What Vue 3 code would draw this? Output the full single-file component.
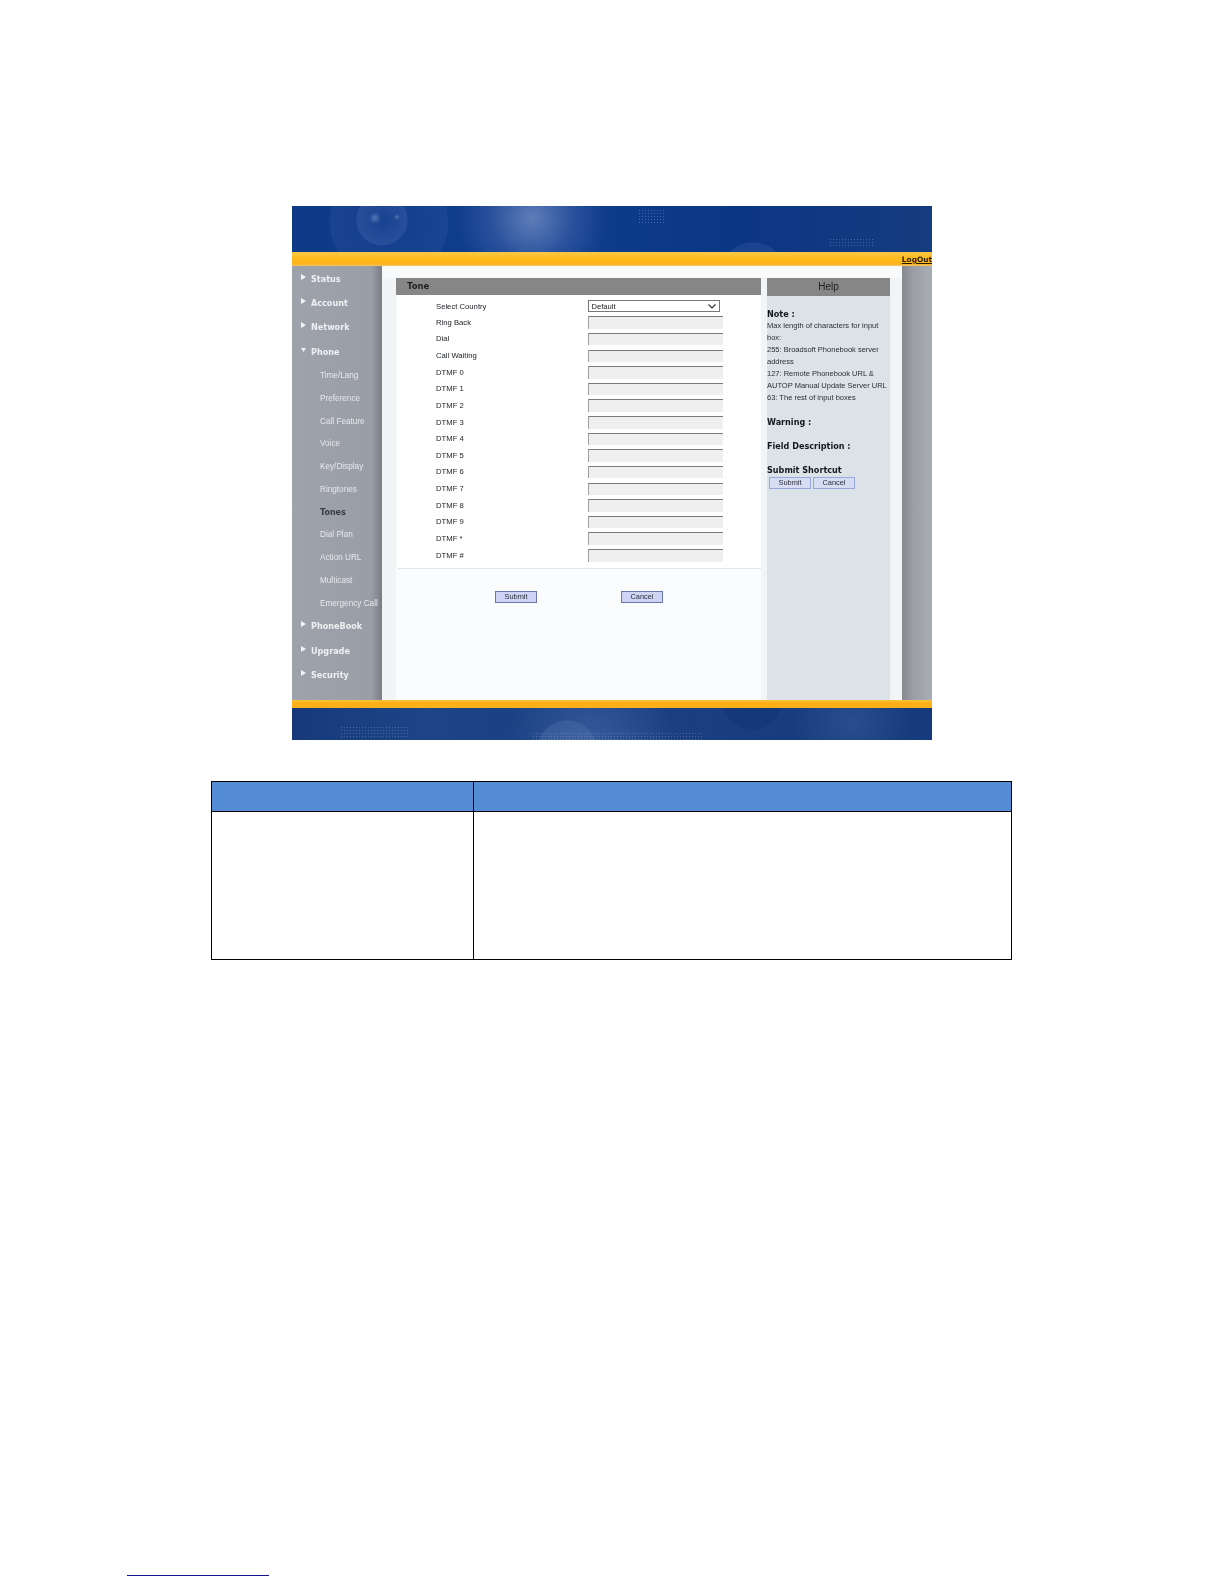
<script setup>
const navTop = ['Status', 'Account', 'Network']
const navSub = ['Time/Lang', 'Preference', 'Call Feature', 'Voice', 'Key/Display', 'Ringtones', 'Tones', 'Dial Plan', 'Action URL', 'Multicast', 'Emergency Call']
const navBottom = ['PhoneBook', 'Upgrade', 'Security']
const fields = ['Ring Back', 'Dial', 'Call Waiting', 'DTMF 0', 'DTMF 1', 'DTMF 2', 'DTMF 3', 'DTMF 4', 'DTMF 5', 'DTMF 6', 'DTMF 7', 'DTMF 8', 'DTMF 9', 'DTMF *', 'DTMF #']
const noteLines = ['Max length of characters for input', 'box:', '255: Broadsoft Phonebook server', 'address', '127: Remote Phonebook URL &', 'AUTOP Manual Update Server URL', '63: The rest of input boxes']
</script>

<template>
  <div class="page">
    <div class="shot">
      <div class="banner">
        <span class="dots dots-a"></span>
        <span class="dots dots-b"></span>
      </div>
      <div class="band"><a class="logout">LogOut</a></div>
      <div class="body">
        <nav class="side">
          <div v-for="n in navTop" :key="n" class="top-item">
            <svg class="tri" width="5" height="6" viewBox="0 0 5 6"><path d="M0 0L5 3L0 6Z" fill="#f2f4f7" /></svg>{{ n }}
          </div>
          <div class="top-item">
            <svg class="tri" width="5" height="6" viewBox="0 0 5 6"><path d="M0 1H5L2.5 5Z" fill="#f2f4f7" /></svg>Phone
          </div>
          <div v-for="s in navSub" :key="s" class="sub-item" :class="{ current: s === 'Tones' }">{{ s }}</div>
          <div v-for="n in navBottom" :key="n" class="top-item">
            <svg class="tri" width="5" height="6" viewBox="0 0 5 6"><path d="M0 0L5 3L0 6Z" fill="#f2f4f7" /></svg>{{ n }}
          </div>
        </nav>
        <main class="main">
          <section class="form-col">
            <h2 class="tone-title">Tone</h2>
            <div class="form">
              <div class="row first">
                <label class="lbl">Select Country</label>
                <div class="select">
                  <span>Default</span>
                  <svg width="8" height="5" viewBox="0 0 8 5"><path d="M0.5 0.5L4 4L7.5 0.5" fill="none" stroke="#333" stroke-width="1.1" /></svg>
                </div>
              </div>
              <div v-for="f in fields" :key="f" class="row">
                <label class="lbl">{{ f }}</label>
                <div class="input"></div>
              </div>
            </div>
            <div class="actions">
              <button class="btn">Submit</button>
              <button class="btn">Cancel</button>
            </div>
          </section>
          <aside class="help">
            <div class="help-title">Help</div>
            <div class="help-body">
              <div class="help-h">Note :</div>
              <div v-for="l in noteLines" :key="l" class="help-line">{{ l }}</div>
              <div class="help-h spaced">Warning :</div>
              <div class="help-h spaced">Field Description :</div>
              <div class="help-h spaced">Submit Shortcut</div>
              <div class="help-btns">
                <button class="btn light">Submit</button>
                <button class="btn light">Cancel</button>
              </div>
            </div>
          </aside>
        </main>
        <div class="gutter"></div>
      </div>
      <div class="band-low"></div>
      <div class="foot-banner">
        <span class="dots dots-c"></span>
        <span class="dots dots-d"></span>
      </div>
    </div>

    <div class="table">
      <div class="cell head c1"></div>
      <div class="cell head c2"></div>
      <div class="cell c1"></div>
      <div class="cell c2"></div>
    </div>

    <div class="footnote"></div>
  </div>
</template>

<style scoped>
.page {
  width: 1224px;
  height: 1584px;
  padding-top: 206px;
  box-sizing: border-box;
  overflow: hidden;
  background: #fff;
  font-family: "Liberation Sans", Arial, sans-serif;
}
.shot {
  width: 640px;
  height: 534px;
  margin-left: 292px;
  display: flex;
  flex-direction: column;
  filter: blur(0.4px);
}
.banner {
  position: relative;
  height: 46px;
  flex: none;
  overflow: hidden;
  background:
    radial-gradient(circle 6px at 83px 12px, rgba(170, 195, 235, 0.4), rgba(170, 195, 235, 0) 100%),
    radial-gradient(circle 3px at 105px 11px, rgba(170, 195, 235, 0.35), rgba(170, 195, 235, 0) 100%),
    radial-gradient(circle 75px at 240px 12px, rgba(125, 150, 200, 0.72), rgba(100, 130, 190, 0.3) 55%, rgba(60, 95, 165, 0) 100%),
    radial-gradient(circle 26px at 90px 14px, rgba(110, 140, 200, 0.05), rgba(110, 140, 200, 0.2) 96%, rgba(110, 140, 200, 0) 100%),
    radial-gradient(circle 60px at 97px 16px, rgba(100, 130, 195, 0.03), rgba(100, 130, 195, 0.12) 97%, rgba(100, 130, 195, 0) 100%),
    radial-gradient(circle 34px at 461px 70px, rgba(60, 95, 165, 0.32) 97%, rgba(60, 95, 165, 0) 100%),
    linear-gradient(90deg, #0f3a88 0%, #103d8f 40%, #0b3684 70%, #153c80 100%);
}
.band {
  height: 14px;
  flex: none;
  display: flex;
  justify-content: flex-end;
  background: linear-gradient(180deg, #fcc94a 0%, #ffbb1c 45%, #fbb41a 85%, #f3c36a 100%);
}
.logout {
  flex: none;
  white-space: nowrap;
  font-family: "DejaVu Sans", sans-serif;
  font-weight: 700;
  font-size: 7.4px;
  line-height: 15px;
  color: #2a1c00;
  text-decoration: underline;
}
.body {
  display: flex;
  height: 434px;
  flex: none;
}
.side {
  width: 90px;
  flex: none;
  box-sizing: border-box;
  background: linear-gradient(90deg, #9ea2aa 0%, #9a9ea7 88%, #7a7d85 100%);
}
.top-item {
  position: relative;
  box-sizing: border-box;
  height: 24.4px;
  padding-top: 0.5px;
  line-height: 24px;
  padding-left: 19px;
  font-family: "DejaVu Sans", sans-serif;
  font-weight: 700;
  font-size: 8.1px;
  color: #eef0f3;
  white-space: nowrap;
}
.tri {
  position: absolute;
  left: 9px;
  top: 7.5px;
}
.sub-item {
  box-sizing: border-box;
  height: 22.75px;
  padding-top: 1.5px;
  line-height: 21.25px;
  padding-left: 28px;
  font-size: 8.2px;
  color: #e6e8ec;
  white-space: nowrap;
}
.sub-item.current {
  font-family: "DejaVu Sans", sans-serif;
  font-weight: 700;
  font-size: 8px;
  color: #383c46;
}
.main {
  width: 520px;
  flex: none;
  box-sizing: border-box;
  padding: 12px 12px 0 14px;
  display: flex;
  gap: 6px;
  background: linear-gradient(180deg, #f9fafb 0, #f9fafb 12px, #f3f4f5 12px);
}
.form-col {
  width: 365px;
  flex: none;
  background: #fbfcfe;
}
.tone-title {
  margin: 0;
  height: 17px;
  line-height: 17px;
  padding-left: 11px;
  font-family: "DejaVu Sans", sans-serif;
  font-weight: 700;
  font-size: 8.5px;
  color: #1f1f1f;
  background: #868686;
}
.form {
  margin-left: 2px;
  box-sizing: border-box;
  height: 274px;
  padding-top: 5px;
  border-bottom: 1px solid #e3e5e8;
  background: #fff;
}
.row {
  display: flex;
  height: 16.63px;
  align-items: flex-start;
}
.row.first {
  height: 16.3px;
}
.lbl {
  width: 189.5px;
  flex: none;
  padding-left: 38px;
  padding-top: 0.5px;
  box-sizing: border-box;
  font-size: 7.7px;
  line-height: 12px;
  color: #20242a;
  white-space: nowrap;
}
.row.first .lbl {
  padding-top: 1px;
}
.select {
  width: 132px;
  height: 12px;
  box-sizing: border-box;
  display: flex;
  align-items: center;
  justify-content: space-between;
  padding: 0 3px 0 3px;
  background: #fff;
  border: 1px solid #777;
  font-size: 7.6px;
  color: #222;
}
.input {
  width: 135px;
  height: 12.5px;
  box-sizing: border-box;
  background: #efefef;
  border-top: 1px solid #7b7b7b;
  border-left: 1px solid #a0a0a0;
}
.actions {
  display: flex;
  gap: 84px;
  padding: 22px 0 0 99px;
}
.btn {
  width: 42px;
  height: 12px;
  padding: 0;
  box-sizing: border-box;
  border: 1px solid #6c78ac;
  background: #ced4f3;
  font-family: "Liberation Sans", Arial, sans-serif;
  font-size: 7.4px;
  line-height: 10px;
  color: #2a2e3a;
}
.help {
  width: 123px;
  flex: none;
  background: #dbe2e8;
}
.help-title {
  height: 18px;
  line-height: 18px;
  text-align: center;
  font-size: 10px;
  color: #1f1f1f;
  background: #868686;
}
.help-body {
  padding-top: 12px;
}
.help-h {
  height: 12px;
  line-height: 12px;
  font-family: "DejaVu Sans", sans-serif;
  font-weight: 700;
  font-size: 8.1px;
  color: #14181e;
  white-space: nowrap;
}
.help-h.spaced {
  margin-top: 12px;
}
.help-line {
  height: 12px;
  line-height: 12px;
  font-size: 7.5px;
  color: #2a2f36;
  white-space: nowrap;
}
.help-btns {
  display: flex;
  gap: 2px;
  margin-top: 1px;
  padding-left: 2px;
}
.btn.light {
  border-color: #9aa7da;
  background: #d6dcf1;
}
.gutter {
  width: 30px;
  flex: none;
  background: linear-gradient(90deg, #85888f 0%, #9a9da4 35%, #a9adb4 100%);
}
.band-low {
  height: 8px;
  flex: none;
  background: linear-gradient(180deg, #fcc23a 0%, #fab016 40%, #fab016 100%);
}
.foot-banner {
  position: relative;
  height: 32px;
  flex: none;
  overflow: hidden;
  background:
    radial-gradient(circle 30px at 275px 42px, rgba(100, 130, 185, 0.25) 97%, rgba(100, 130, 185, 0) 100%),
    radial-gradient(circle 85px at 300px 34px, rgba(80, 115, 175, 0.5), rgba(80, 115, 175, 0) 100%),
    radial-gradient(circle 30px at 460px -8px, rgba(15, 45, 105, 0.3) 97%, rgba(15, 45, 105, 0) 100%),
    radial-gradient(circle 60px at 560px 14px, rgba(75, 110, 170, 0.35), rgba(75, 110, 170, 0) 100%),
    linear-gradient(90deg, #17397a 0%, #1d4487 20%, #1a3e80 60%, #163a7b 100%);
}
.dots {
  position: absolute;
  background-image: radial-gradient(circle, rgba(175, 195, 230, 0.32) 0.7px, rgba(175, 195, 230, 0) 1px);
  background-size: 3px 3px;
}
.dots-a { left: 346px; top: 3px; width: 28px; height: 16px; }
.dots-b { left: 537px; top: 32px; width: 44px; height: 8px; }
.dots-c { left: 48px; top: 18px; width: 70px; height: 12px; }
.dots-d { left: 240px; top: 24px; width: 170px; height: 8px; }
.table {
  width: 801px;
  margin: 41px 0 0 211px;
  display: grid;
  grid-template-columns: 262px 538px;
  grid-template-rows: 30px 148px;
  box-sizing: border-box;
  border-top: 1px solid #000;
  border-left: 1px solid #000;
  filter: blur(0.2px);
}
.cell {
  box-sizing: border-box;
  border-right: 1px solid #000;
  border-bottom: 1px solid #000;
}
.cell.head {
  background: #548dd4;
}
.footnote {
  width: 142px;
  height: 1px;
  margin: 615px 0 0 127px;
  background: #14148c;
}
</style>
